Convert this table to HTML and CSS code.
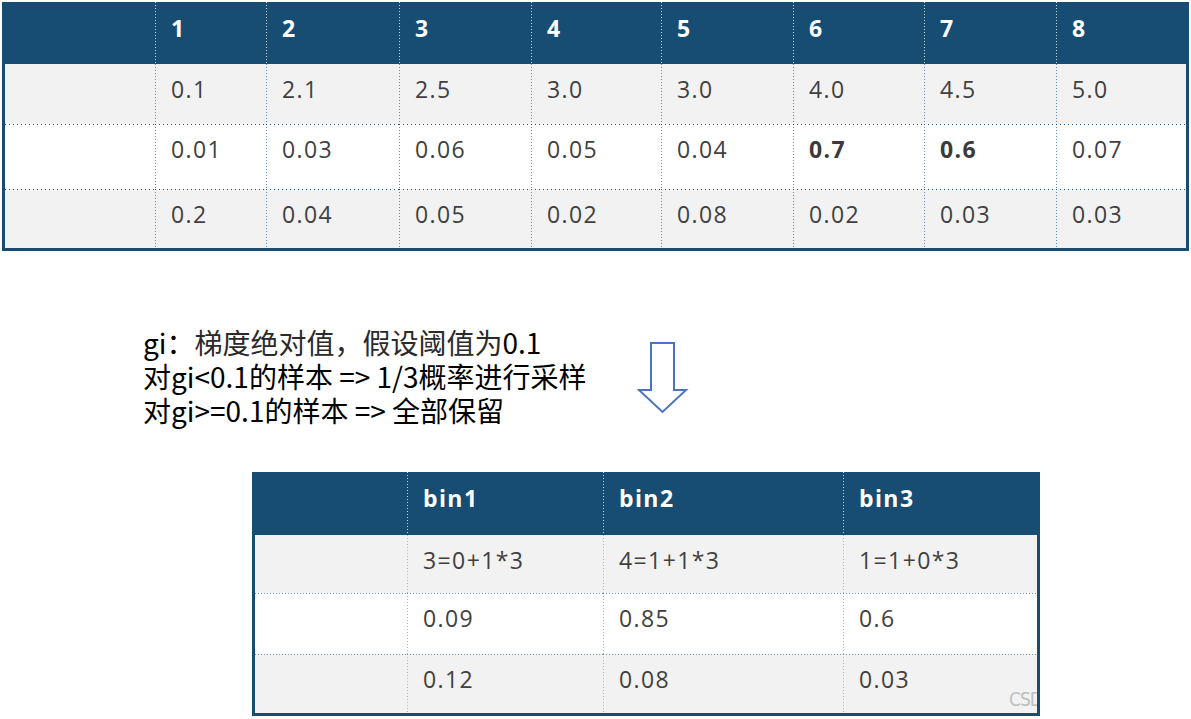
FILE: index.html
```html
<!DOCTYPE html>
<html lang="zh">
<head>
<meta charset="utf-8">
<title>GOSS sampling</title>
<link rel="stylesheet" href="styles.css">
</head>
<body>
<table class="grid grid-top">
  <colgroup>
    <col class="c-lead"><col style="width:111px"><col style="width:133px"><col style="width:132px"><col style="width:130px"><col style="width:132px"><col style="width:131px"><col style="width:132px"><col style="width:130px">
  </colgroup>
  <thead>
    <tr class="r-head"><th></th><th>1</th><th>2</th><th>3</th><th>4</th><th>5</th><th>6</th><th>7</th><th>8</th></tr>
  </thead>
  <tbody>
    <tr class="r-a shade"><td></td><td>0.1</td><td>2.1</td><td>2.5</td><td>3.0</td><td>3.0</td><td>4.0</td><td>4.5</td><td>5.0</td></tr>
    <tr class="r-b"><td></td><td>0.01</td><td>0.03</td><td>0.06</td><td>0.05</td><td>0.04</td><td><b>0.7</b></td><td><b>0.6</b></td><td>0.07</td></tr>
    <tr class="r-c shade"><td></td><td>0.2</td><td>0.04</td><td>0.05</td><td>0.02</td><td>0.08</td><td>0.02</td><td>0.03</td><td>0.03</td></tr>
  </tbody>
</table>

<section class="middle">
  <div class="notes">
    <p>gi：<span class="soft">梯度绝对值，假设阈值为</span>0.1</p>
    <p>对gi&lt;0.1的样本 =&gt; 1/3概率进行采样</p>
    <p>对gi&gt;=0.1的样本 =&gt; 全部保留</p>
  </div>
  <svg class="arrow" width="52" height="74" viewBox="0 0 52 74" aria-hidden="true">
    <polygon points="14,2 37,2 37,49 49,49 25.5,71 2,49 14,49" fill="#ffffff" stroke="#4a74c0" stroke-width="2" stroke-linejoin="miter"/>
  </svg>
</section>

<div class="bin-wrap">
  <table class="grid grid-bin">
    <colgroup>
      <col style="width:152px"><col style="width:196px"><col style="width:240px"><col style="width:194px">
    </colgroup>
    <thead>
      <tr class="b-head"><th></th><th>bin1</th><th>bin2</th><th>bin3</th></tr>
    </thead>
    <tbody>
      <tr class="b-a shade"><td></td><td>3=0+1*3</td><td>4=1+1*3</td><td>1=1+0*3</td></tr>
      <tr class="b-b"><td></td><td>0.09</td><td>0.85</td><td>0.6</td></tr>
      <tr class="b-c shade"><td></td><td>0.12</td><td>0.08</td><td>0.03</td></tr>
    </tbody>
  </table>
  <span class="watermark">CSDN</span>
</div>
</body>
</html>
```

FILE: styles.css
```css
html, body {
  margin: 0;
  padding: 0;
  background: #ffffff;
}

body {
  width: 1191px;
  height: 719px;
  overflow: hidden;
  font-family: "Open Sans", "Noto Sans", sans-serif;
}

/* ---------- shared table look ---------- */
.grid {
  border-collapse: separate;
  border-spacing: 0;
  table-layout: fixed;
  border-left: 3px solid #174d73;
  border-right: 3px solid #174d73;
  border-bottom: 3px solid #174d73;
  font-size: 23px;
  letter-spacing: 1.4px;
  color: #404040;
}

.grid th,
.grid td {
  padding: 10px 0 0 16px;
  vertical-align: top;
  text-align: left;
  white-space: nowrap;
  line-height: 31px;
}

.grid thead tr {
  background: #174d73;
}

.grid th {
  color: #ffffff;
  font-weight: 700;
  padding-top: 11px;
}

.grid th + th {
  background: linear-gradient(#c9d6e3 1px, transparent 1px) 0 0 / 1px 3px repeat-y;
}

.grid .shade {
  background: #f2f2f2;
}

.grid td b {
  font-weight: 700;
  color: #3a3a3a;
}

/* vertical dotted separators in body */
.grid tbody td + td {
  background: linear-gradient(#5d8db8 1px, transparent 1px) 0 0 / 1px 3px repeat-y;
}

/* horizontal dotted separators between body rows */
.grid tbody tr + tr td {
  background: linear-gradient(to right, #1f4f7a 1px, transparent 1px) 0 0 / 4px 1px repeat-x;
}

.grid tbody tr + tr td + td {
  background:
    linear-gradient(to right, #1f4f7a 1px, transparent 1px) 0 0 / 4px 1px repeat-x,
    linear-gradient(#5d8db8 1px, transparent 1px) 0 0 / 1px 3px repeat-y;
}

/* ---------- top table ---------- */
.grid-top {
  width: 1187px;
  margin: 2px 0 0 2px;
}

.c-lead { width: 150px; }

.r-head { height: 62px; }
.r-a { height: 60px; }
.r-b { height: 65px; }
.r-c { height: 59px; }

/* ---------- middle notes ---------- */
.middle {
  height: 221px;
  display: grid;
  grid-template-columns: 494px 52px;
  padding-left: 143px;
  box-sizing: border-box;
}

.notes {
  margin-top: 74px;
  font-family: "Noto Sans CJK SC", "Noto Sans", sans-serif;
  font-size: 28px;
  line-height: 34px;
  color: #000000;
}

.notes p {
  margin: 0;
  height: 34px;
  white-space: nowrap;
}

.notes .soft {
  color: #2a2a2a;
}

.arrow {
  display: block;
  margin-top: 90px;
}

/* ---------- bin table ---------- */
.bin-wrap {
  position: relative;
  width: 788px;
  margin-left: 252px;
}

.grid-bin {
  width: 788px;
}

.grid-bin tbody td + td {
  background: linear-gradient(#9fb7cf 1px, transparent 1px) 0 0 / 1px 3px repeat-y;
}

.grid-bin tbody tr + tr td {
  background: linear-gradient(to right, #6f93b6 1px, transparent 1px) 0 0 / 3px 1px repeat-x;
}

.grid-bin tbody tr + tr td + td {
  background:
    linear-gradient(to right, #6f93b6 1px, transparent 1px) 0 0 / 3px 1px repeat-x,
    linear-gradient(#9fb7cf 1px, transparent 1px) 0 0 / 1px 3px repeat-y;
}

.b-head { height: 63px; }
.b-a { height: 58px; }
.b-b { height: 61px; }
.b-c { height: 59px; }

.watermark {
  position: absolute;
  left: 757px;
  top: 216px;
  width: 28px;
  overflow: hidden;
  white-space: nowrap;
  font-family: "DejaVu Sans Condensed", "Liberation Sans", sans-serif;
  font-size: 19px;
  line-height: 22px;
  letter-spacing: -1px;
  color: #bfbfbf;
}
```
